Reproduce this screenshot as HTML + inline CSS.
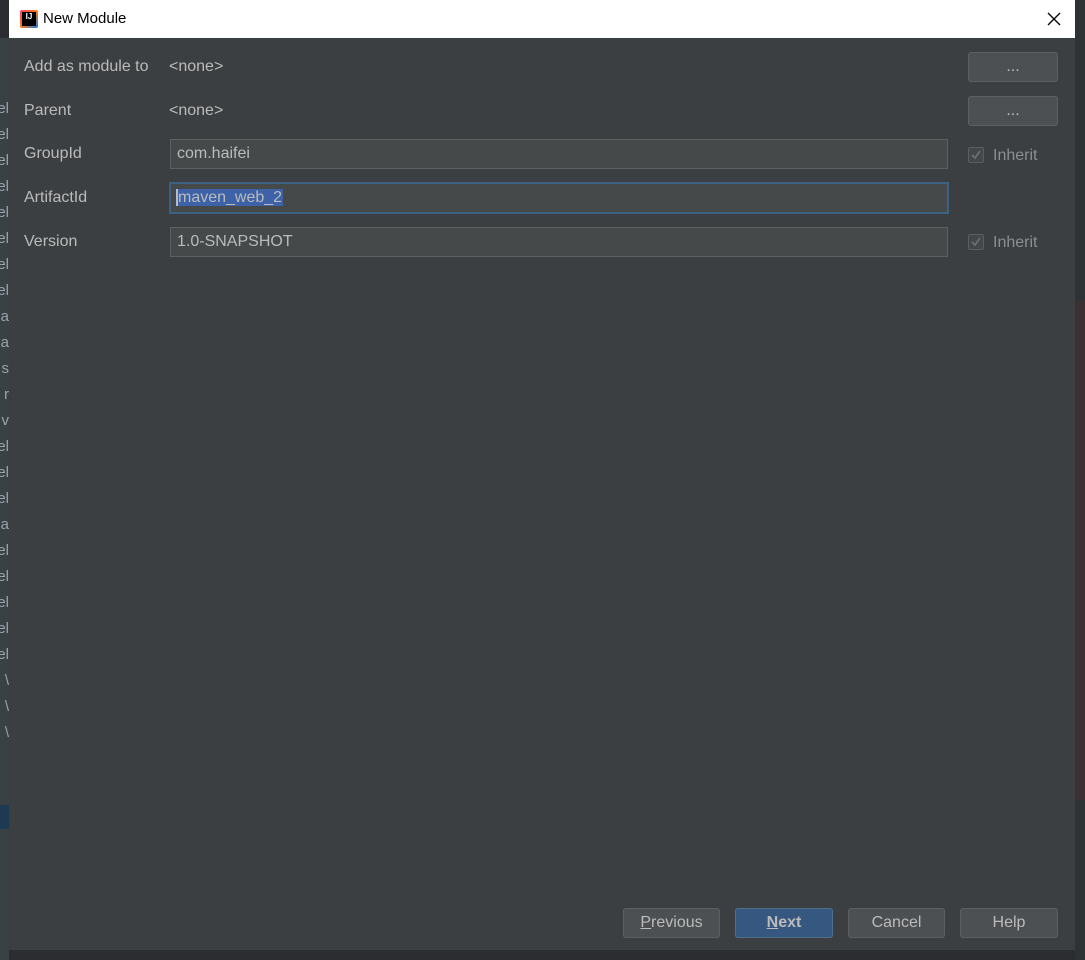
<!DOCTYPE html><html><head><meta charset="utf-8"><style>
body{margin:0;width:1085px;height:960px;background:#2b2d30;position:relative;overflow:hidden;font-family:"Liberation Sans",sans-serif;}
.a{position:absolute}
.strip{left:0;top:38px;width:9px;height:922px;background:#3a4145;color:#9aa3a8;font-size:15px;overflow:hidden}
.strip div{position:absolute;right:0;white-space:nowrap}
.dlg{left:9px;top:0;width:1066px;height:950px;background:#3c3f41}
.title{left:9px;top:0;width:1066px;height:38px;background:#fff}
.lbl{color:#bbbbbb;font-size:16px}
.fld{background:#45494a;border:1px solid #5e6060;height:30px;box-sizing:border-box;color:#bbbbbb;font-size:16px;line-height:28px;padding-left:6px}
.btn{background:#4c5052;border:1px solid #5e6060;border-radius:3px;box-sizing:border-box;color:#bbbbbb;font-size:16px;text-align:center;line-height:28px;height:30px}
.cb{width:16px;height:16px;border:1px solid #5b5e60;background:#43474a;box-sizing:border-box;border-radius:2px}
</style></head><body>
<div class="a strip">
<div style="top:62px">el</div><div style="top:88px">el</div><div style="top:114px">el</div><div style="top:140px">el</div><div style="top:166px">el</div><div style="top:192px">el</div><div style="top:218px">el</div><div style="top:244px">el</div><div style="top:270px">a</div><div style="top:296px">a</div><div style="top:322px">s</div><div style="top:348px">r</div><div style="top:374px">v</div><div style="top:400px">el</div><div style="top:426px">el</div><div style="top:452px">el</div><div style="top:478px">a</div><div style="top:504px">el</div><div style="top:530px">el</div><div style="top:556px">el</div><div style="top:582px">el</div><div style="top:608px">el</div><div style="top:634px">\</div><div style="top:660px">\</div><div style="top:686px">\</div>
<div style="top:767px;left:0;width:9px;height:24px;background:#1d3a52"></div>
</div>
<div class="a" style="left:1075px;top:0;width:10px;height:960px;background:#2f3234"></div>
<div class="a" style="left:1075px;top:300px;width:10px;height:500px;background:#3a3133"></div>
<div class="a dlg"></div>
<div class="a title"></div>
<div class="a" style="left:20px;top:10px;width:18px;height:18px;background:linear-gradient(135deg,#fc3f6d,#f97a12 50%,#087cfa);border-radius:2px"></div>
<div class="a" style="left:22px;top:12px;width:14px;height:14px;background:#000;color:#fff;font-size:8px;font-weight:bold;line-height:9px;text-align:center">IJ</div>
<div class="a" style="left:43px;top:10px;font-size:15px;color:#000">New Module</div>
<svg class="a" style="left:1047px;top:12px" width="14" height="14"><path d="M1 1L13 13M13 1L1 13" stroke="#000" stroke-width="1.3"/></svg>
<div class="a lbl" style="left:24px;top:58px">Add as module to</div>
<div class="a lbl" style="left:169px;top:58px">&lt;none&gt;</div>
<div class="a lbl" style="left:24px;top:102px">Parent</div>
<div class="a lbl" style="left:169px;top:102px">&lt;none&gt;</div>
<div class="a lbl" style="left:24px;top:145px">GroupId</div>
<div class="a lbl" style="left:24px;top:189px">ArtifactId</div>
<div class="a lbl" style="left:24px;top:233px">Version</div>
<div class="a btn" style="left:968px;top:52px;width:90px">...</div>
<div class="a btn" style="left:968px;top:96px;width:90px">...</div>
<div class="a fld" style="left:170px;top:139px;width:778px">com.haifei</div>
<div class="a fld" style="left:169px;top:182px;width:780px;height:32px;border:2px solid #3d6185;line-height:28px;padding-left:5px"><span style="border-left:2px solid #bbb;background:#3d62a8;color:#bbbbbb;padding-right:1px">maven_web_2</span></div>
<div class="a fld" style="left:170px;top:227px;width:778px">1.0-SNAPSHOT</div>
<div class="a cb" style="left:968px;top:147px"></div>
<svg class="a" style="left:969px;top:148px" width="14" height="14"><path d="M3 7L6 10L11 3" stroke="#6e7173" stroke-width="1.6" fill="none"/></svg>
<div class="a lbl" style="left:993px;top:147px;color:#8c8f91">Inherit</div>
<div class="a cb" style="left:968px;top:234px"></div>
<svg class="a" style="left:969px;top:235px" width="14" height="14"><path d="M3 7L6 10L11 3" stroke="#6e7173" stroke-width="1.6" fill="none"/></svg>
<div class="a lbl" style="left:993px;top:234px;color:#8c8f91">Inherit</div>
<div class="a btn" style="left:623px;top:908px;width:97px"><u>P</u>revious</div>
<div class="a btn" style="left:735px;top:908px;width:98px;background:#365880;border-color:#4c708c;color:#bbbbbb;font-weight:bold"><u>N</u>ext</div>
<div class="a btn" style="left:848px;top:908px;width:97px">Cancel</div>
<div class="a btn" style="left:960px;top:908px;width:98px">Help</div>
</body></html>
